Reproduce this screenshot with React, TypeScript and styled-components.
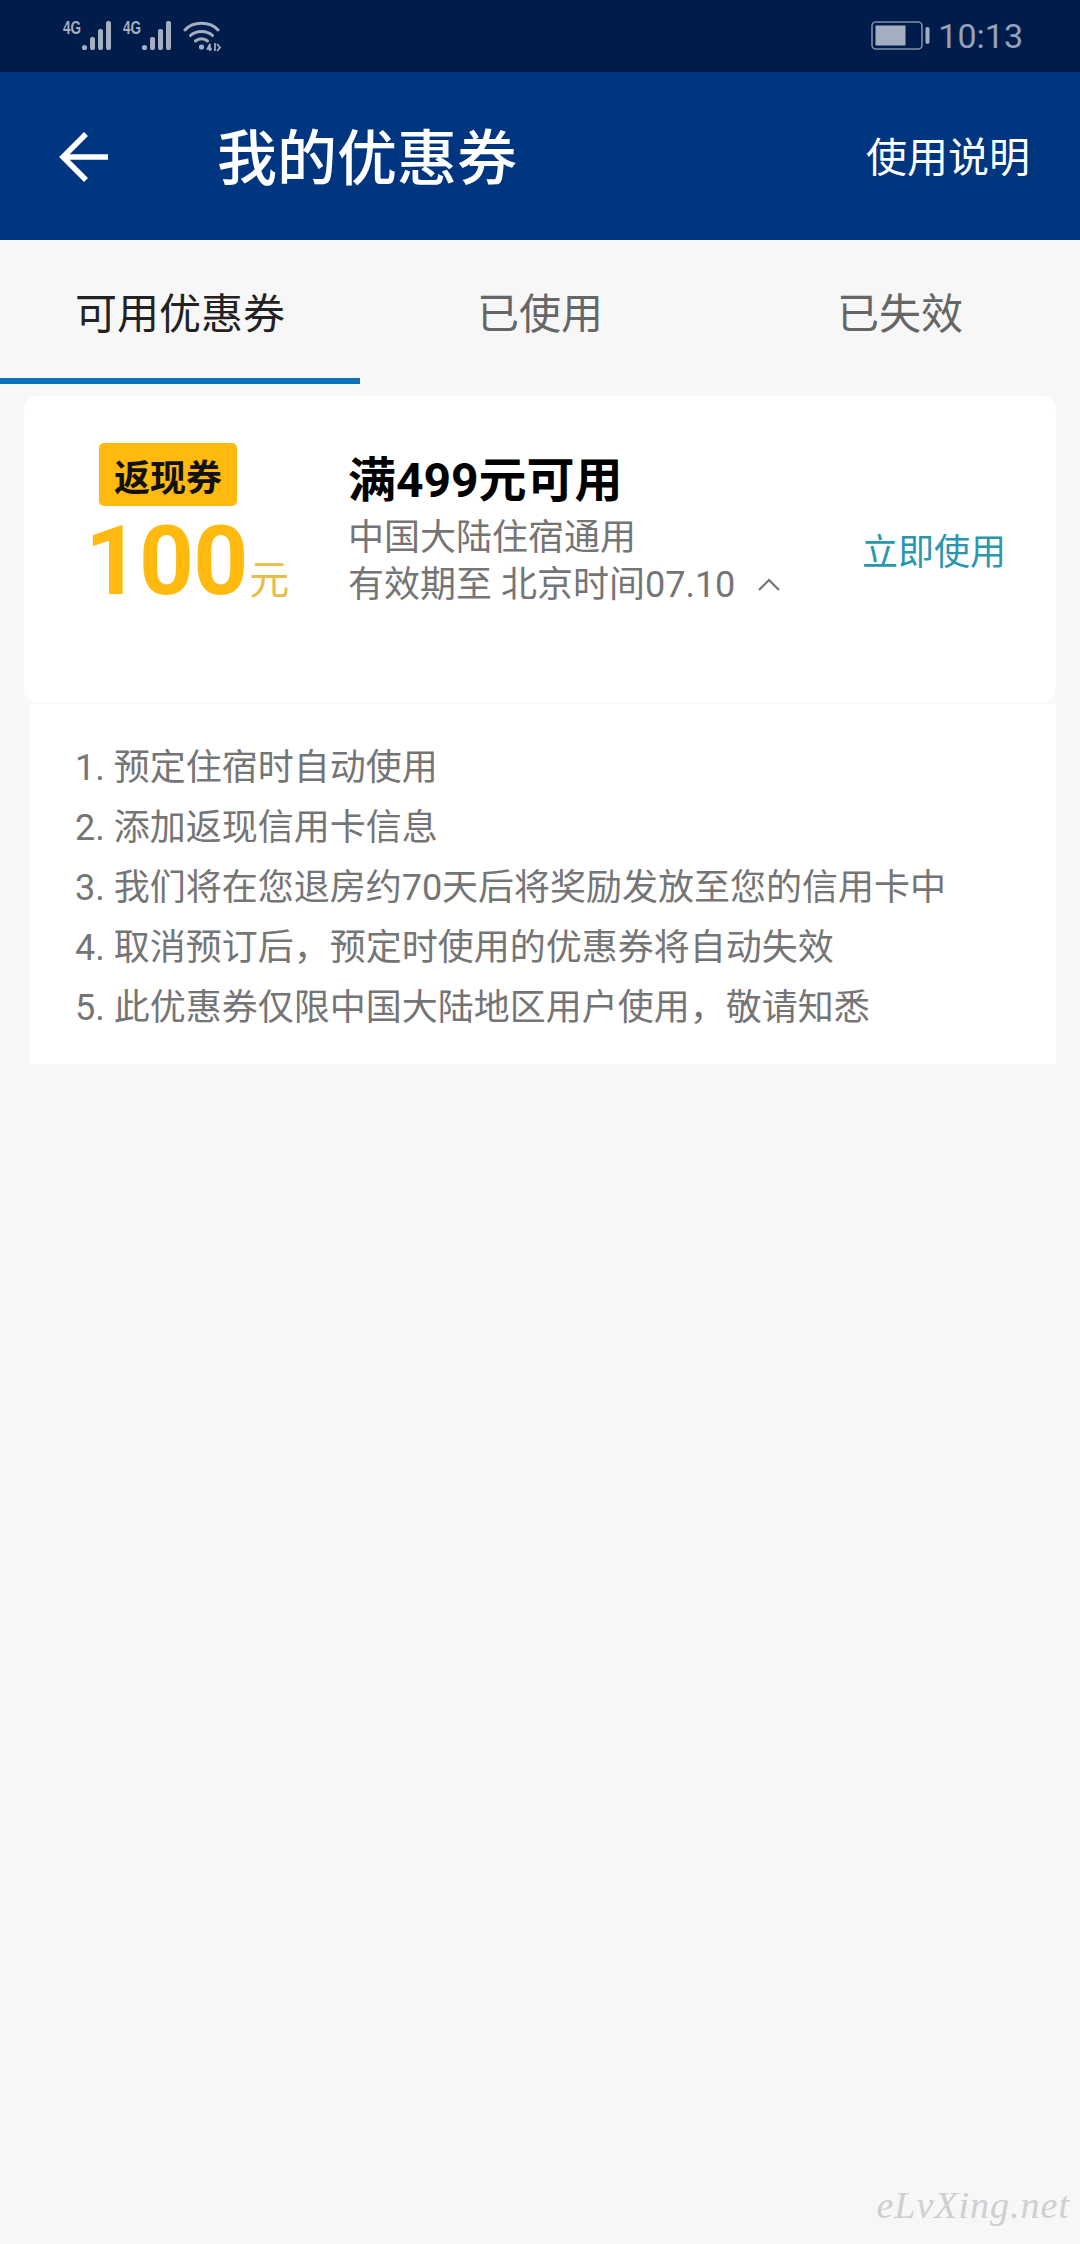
import styled, {createGlobalStyle} from 'styled-components'

const tabs = ['可用优惠券', '已使用', '已失效']

const rules = [
    '1. 预定住宿时自动使用',
    '2. 添加返现信用卡信息',
    '3. 我们将在您退房约70天后将奖励发放至您的信用卡中',
    '4. 取消预订后，预定时使用的优惠券将自动失效',
    '5. 此优惠券仅限中国大陆地区用户使用，敬请知悉'
]

const Signal = () => (
    <SignalGroup>
        <NetworkLabel>4G</NetworkLabel>
        <svg width="33" height="32" viewBox="0 0 33 32" fill="#a3aec1">
            <circle cx="4.5" cy="27.5" r="2.6"/>
            <rect x="10" y="17" width="5" height="13" rx="2"/>
            <rect x="18" y="9" width="5" height="21" rx="2"/>
            <rect x="26" y="1" width="5" height="29" rx="2"/>
        </svg>
    </SignalGroup>
)

const Wifi = () => (
    <svg width="38" height="32" viewBox="0 0 38 32" fill="none" stroke="#a3aec1" strokeWidth="3" strokeLinecap="round">
        <path d="M2 10 C 10 1, 27 1, 35 10"/>
        <path d="M7.5 15.5 C 13 10, 24 10, 29.5 15.5"/>
        <path d="M12.5 21 C 16 18, 21 18, 24.5 21"/>
        <circle cx="18.5" cy="27" r="2.6" fill="#a3aec1" stroke="none"/>
        <path d="M27 31 L27 24 L24.5 29 L29 29 M32 23 L32 31 M34 24 L37 27.5 L34 31" strokeWidth="1.7" strokeLinecap="butt"/>
    </svg>
)

const Battery = () => (
    <svg width="59" height="30" viewBox="0 0 59 30">
        <rect x="1" y="1" width="50" height="27" rx="4" fill="none" stroke="#7f8ea8" strokeWidth="1.6"/>
        <rect x="4.5" y="4.5" width="30" height="20" fill="#a3aec1"/>
        <rect x="54.5" y="6" width="4" height="17" rx="2" fill="#a3aec1"/>
    </svg>
)

const BackArrow = () => (
    <svg width="50" height="50" viewBox="0 0 50 50" fill="none" stroke="#fff" strokeWidth="5.5">
        <path d="M49 25 L5 25"/>
        <path d="M27 2 L4 25 L27 48"/>
    </svg>
)

const Chevron = () => (
    <svg width="24" height="14" viewBox="0 0 24 14" fill="none" stroke="#757575" strokeWidth="2.2">
        <path d="M2 13 L12 3 L22 13"/>
    </svg>
)

export default () => {
    return (
        <Page>
            <GlobalStyle/>
            <StatusBar>
                <StatusLeft>
                    <Signal/>
                    <Signal/>
                    <Wifi/>
                </StatusLeft>
                <StatusRight>
                    <Battery/>
                    <Clock>10:13</Clock>
                </StatusRight>
            </StatusBar>
            <Header>
                <BackButton><BackArrow/></BackButton>
                <Title>我的优惠券</Title>
                <HelpLink>使用说明</HelpLink>
            </Header>
            <TabBar>
                {tabs.map((tab, i) => <Tab key={tab} $active={i === 0}>{tab}</Tab>)}
            </TabBar>
            <Coupon>
                <Amount>
                    <Badge>返现券</Badge>
                    <Value>100<Unit>元</Unit></Value>
                </Amount>
                <Info>
                    <CouponTitle>满499元可用</CouponTitle>
                    <InfoLine>中国大陆住宿通用</InfoLine>
                    <InfoLine>有效期至 北京时间07.10<ChevronWrap><Chevron/></ChevronWrap></InfoLine>
                </Info>
                <UseNow>立即使用</UseNow>
            </Coupon>
            <Rules>
                {rules.map(rule => <Rule key={rule}>{rule}</Rule>)}
            </Rules>
            <Watermark>eLvXing.net</Watermark>
        </Page>
    )
}

const GlobalStyle = createGlobalStyle`
    body {
        margin: 0;
        background: #f7f7f7;
        font-family: Roboto, "Noto Sans CJK SC", sans-serif;
    }
`

const Page = styled.div`
    position: relative;
    width: 1080px;
    height: 2244px;
    overflow: hidden;
    background: #f7f7f7;
`

const StatusBar = styled.div`
    height: 72px;
    box-sizing: border-box;
    padding: 0 57px 0 63px;
    display: flex;
    align-items: center;
    justify-content: space-between;
    background: #001c4a;
`

const StatusLeft = styled.div`
    display: flex;
    align-items: center;
    gap: 10px;
`

const SignalGroup = styled.div`
    display: flex;
    align-items: flex-start;
    height: 32px;
`

const NetworkLabel = styled.span`
    width: 17px;
    margin-top: -1px;
    font: 700 18px/18px "Liberation Sans", sans-serif;
    color: #a3aec1;
    transform: scaleX(0.75);
    transform-origin: left;
`

const StatusRight = styled.div`
    display: flex;
    align-items: center;
    gap: 8px;
`

const Clock = styled.span`
    font: 400 34px/40px Roboto, sans-serif;
    color: #94a1b8;
`

const Header = styled.div`
    height: 168px;
    box-sizing: border-box;
    padding: 4px 50px 0 59px;
    display: flex;
    align-items: center;
    background: #003580;
    color: #fff;
`

const BackButton = styled.div`
    width: 158px;
    display: flex;
    align-items: center;
    margin-top: -2px;
`

const Title = styled.div`
    flex: 1;
    padding-top: 3px;
    font-size: 60px;
    font-weight: 500;
    line-height: 80px;
`

const HelpLink = styled.div`
    font-size: 41px;
    line-height: 60px;
`

const TabBar = styled.div`
    height: 144px;
    display: grid;
    grid-template-columns: repeat(3, 360px);
`

const Tab = styled.div<{$active?: boolean}>`
    display: flex;
    align-items: center;
    justify-content: center;
    box-sizing: border-box;
    padding-top: 3px;
    font-size: 42px;
    color: ${props => props.$active ? '#222' : '#666'};
    border-bottom: 6px solid ${props => props.$active ? '#0d72b9' : 'transparent'};
`

const Coupon = styled.div`
    position: relative;
    z-index: 1;
    margin: 12px 24px 0;
    height: 307px;
    box-sizing: border-box;
    padding: 47px 50px 0 0;
    display: flex;
    align-items: flex-start;
    background: #fff;
    border-radius: 14px;
`

const Amount = styled.div`
    width: 324px;
    display: flex;
    flex-direction: column;
    align-items: flex-start;
`

const Badge = styled.div`
    margin-left: 75px;
    width: 138px;
    height: 63px;
    display: flex;
    align-items: center;
    justify-content: center;
    background: #ffb90f;
    border-radius: 5px;
    font-size: 36px;
    font-weight: 700;
    color: #111;
`

const Value = styled.div`
    margin: 4px 0 0 61px;
    font-family: Roboto, sans-serif;
    font-size: 96px;
    font-weight: 700;
    line-height: 102px;
    letter-spacing: -1px;
    color: #ffb90f;
    white-space: nowrap;
`

const Unit = styled.span`
    margin-left: 2px;
    font-family: "Noto Sans CJK SC", sans-serif;
    font-size: 40px;
    font-weight: 400;
    letter-spacing: 0;
    color: #e9bd4a;
`

const Info = styled.div`
    flex: 1;
    padding-top: 4px;
    display: flex;
    flex-direction: column;
`

const CouponTitle = styled.div`
    font-size: 48px;
    font-weight: 700;
    line-height: 68px;
    color: #000;
`

const InfoLine = styled.div`
    display: flex;
    align-items: center;
    font-size: 36px;
    line-height: 47px;
    color: #757575;
`

const ChevronWrap = styled.span`
    display: flex;
    margin-left: 22px;
    margin-top: -4px;
`

const UseNow = styled.div`
    margin-top: 85px;
    font-size: 36px;
    line-height: 50px;
    color: #2a97ae;
`

const Rules = styled.div`
    margin: 1px 24px 0 30px;
    height: 360px;
    box-sizing: border-box;
    padding: 34px 0 0 45px;
    background: #fff;
`

const Rule = styled.div`
    font-size: 36px;
    line-height: 60px;
    color: #757575;
`

const Watermark = styled.div`
    position: absolute;
    right: 10px;
    bottom: 14px;
    font: italic 400 38px/50px "Liberation Serif", serif;
    letter-spacing: 1px;
    color: #cfcfcf;
`
